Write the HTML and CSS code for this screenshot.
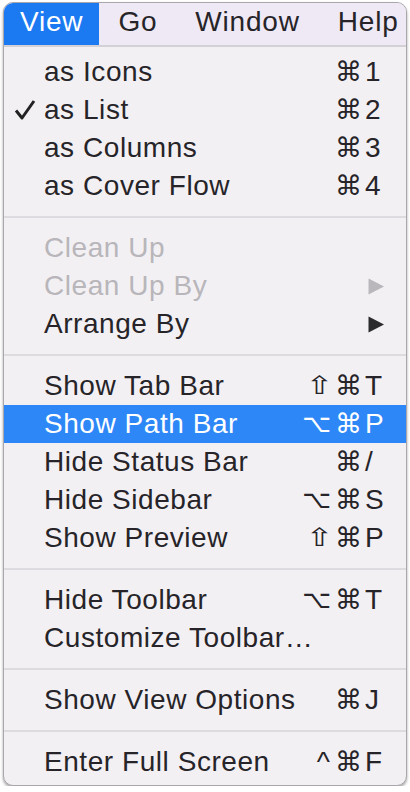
FILE: index.html
```html
<!DOCTYPE html>
<html>
<head>
<meta charset="utf-8">
<link rel="stylesheet" href="styles.css">
</head>
<body>
<div class="menu">
  <div class="menubar">
    <span class="title active">View</span>
    <span class="title">Go</span>
    <span class="title">Window</span>
    <span class="title">Help</span>
  </div>
  <div class="body">
    <div class="group">
      <div class="row"><span class="check"></span><span class="label">as Icons</span><span class="mods"><span class="cmd">⌘</span></span><span class="key">1</span></div>
      <div class="row"><span class="check"><svg width="22" height="22" viewBox="0 0 22 22"><path d="M2 11.5 L8 19 L20 2" fill="none" stroke="#222" stroke-width="3" stroke-linejoin="round"/></svg></span><span class="label">as List</span><span class="mods"><span class="cmd">⌘</span></span><span class="key">2</span></div>
      <div class="row"><span class="check"></span><span class="label">as Columns</span><span class="mods"><span class="cmd">⌘</span></span><span class="key">3</span></div>
      <div class="row"><span class="check"></span><span class="label">as Cover Flow</span><span class="mods"><span class="cmd">⌘</span></span><span class="key">4</span></div>
    </div>
    <div class="sep"></div>
    <div class="group">
      <div class="row disabled"><span class="check"></span><span class="label">Clean Up</span><span class="mods"></span><span class="key"></span></div>
      <div class="row disabled"><span class="check"></span><span class="label">Clean Up By</span><span class="mods"></span><span class="key"><svg class="arrow" width="17" height="17" viewBox="0 0 17 17"><path d="M0.5 0.5 L16 8.5 L0.5 16.5 Z"/></svg></span></div>
      <div class="row"><span class="check"></span><span class="label">Arrange By</span><span class="mods"></span><span class="key"><svg class="arrow" width="17" height="17" viewBox="0 0 17 17"><path d="M0.5 0.5 L16 8.5 L0.5 16.5 Z"/></svg></span></div>
    </div>
    <div class="sep"></div>
    <div class="group">
      <div class="row"><span class="check"></span><span class="label">Show Tab Bar</span><span class="mods"><span class="shift">⇧</span><span class="cmd">⌘</span></span><span class="key">T</span></div>
      <div class="row selected"><span class="check"></span><span class="label">Show Path Bar</span><span class="mods"><span class="opt">⌥</span><span class="cmd">⌘</span></span><span class="key">P</span></div>
      <div class="row"><span class="check"></span><span class="label">Hide Status Bar</span><span class="mods"><span class="cmd">⌘</span></span><span class="key">/</span></div>
      <div class="row"><span class="check"></span><span class="label">Hide Sidebar</span><span class="mods"><span class="opt">⌥</span><span class="cmd">⌘</span></span><span class="key">S</span></div>
      <div class="row"><span class="check"></span><span class="label">Show Preview</span><span class="mods"><span class="shift">⇧</span><span class="cmd">⌘</span></span><span class="key">P</span></div>
    </div>
    <div class="sep"></div>
    <div class="group">
      <div class="row"><span class="check"></span><span class="label">Hide Toolbar</span><span class="mods"><span class="opt">⌥</span><span class="cmd">⌘</span></span><span class="key">T</span></div>
      <div class="row"><span class="check"></span><span class="label">Customize Toolbar…</span><span class="mods"></span><span class="key"></span></div>
    </div>
    <div class="sep"></div>
    <div class="group">
      <div class="row"><span class="check"></span><span class="label">Show View Options</span><span class="mods"><span class="cmd">⌘</span></span><span class="key">J</span></div>
    </div>
    <div class="sep"></div>
    <div class="group">
      <div class="row"><span class="check"></span><span class="label">Enter Full Screen</span><span class="mods"><span class="ctrl">^</span><span class="cmd">⌘</span></span><span class="key">F</span></div>
    </div>
  </div>
</div>
</body>
</html>
```

FILE: styles.css
```css
html, body {
  margin: 0;
  padding: 0;
  background: #ffffff;
}

body {
  padding: 2px 3px 0 3px;
  font-family: "Liberation Sans", Arial, "DejaVu Sans", sans-serif;
  font-size: 28px;
  color: #262428;
}

.menu {
  width: 402px;
  border: 1px solid #aaa7ac;
  border-radius: 10px;
  background: #f3f0f4;
  overflow: hidden;
  box-shadow: 0 2px 3px rgba(0, 0, 0, 0.35);
}

.menubar {
  display: flex;
  height: 42px;
  background: #efe9f5;
  border-bottom: 2px solid #d3d0d6;
}

.title {
  padding: 0 19px 4px 19px;
  line-height: 38px;
  letter-spacing: 0.8px;
}

.title.active {
  background: #1b79f2;
  color: #ffffff;
  padding-left: 16px;
  padding-right: 16px;
}

.body {
  padding: 6px 0 4px 0;
}

.row {
  display: grid;
  grid-template-columns: 40px 1fr auto 26px;
  height: 38px;
  line-height: 38px;
  padding-right: 18px;
  align-items: center;
}

.row.selected {
  background: #2e87f7;
  color: #ffffff;
}

.row.disabled {
  color: #b8b6ba;
}

.check {
  display: flex;
  align-items: center;
  justify-content: flex-end;
  padding-right: 8px;
  height: 38px;
}

.check svg {
  display: block;
}

.label {
  letter-spacing: 0.55px;
  white-space: nowrap;
}

.mods {
  display: flex;
  justify-content: flex-end;
  align-items: center;
  height: 38px;
  font-family: "DejaVu Sans", sans-serif;
}

.cmd {
  font-size: 27px;
  margin-left: 4px;
}

.shift {
  display: inline-block;
  font-size: 25px;
  transform: scaleX(1.35);
  margin-right: 1px;
}

.opt {
  font-size: 25px;
  display: inline-block;
}

.ctrl {
  font-family: "Liberation Sans", sans-serif;
  font-size: 28px;
  margin-right: 1px;
}

.key {
  padding-left: 3px;
  display: flex;
  align-items: center;
  height: 38px;
}

.arrow {
  display: block;
  margin-left: 3px;
  fill: #2b2a2d;
}

.row.disabled .arrow {
  fill: #b9b7bb;
}

.sep {
  height: 2px;
  margin: 11px 0;
  background: #dedbe0;
}
```
